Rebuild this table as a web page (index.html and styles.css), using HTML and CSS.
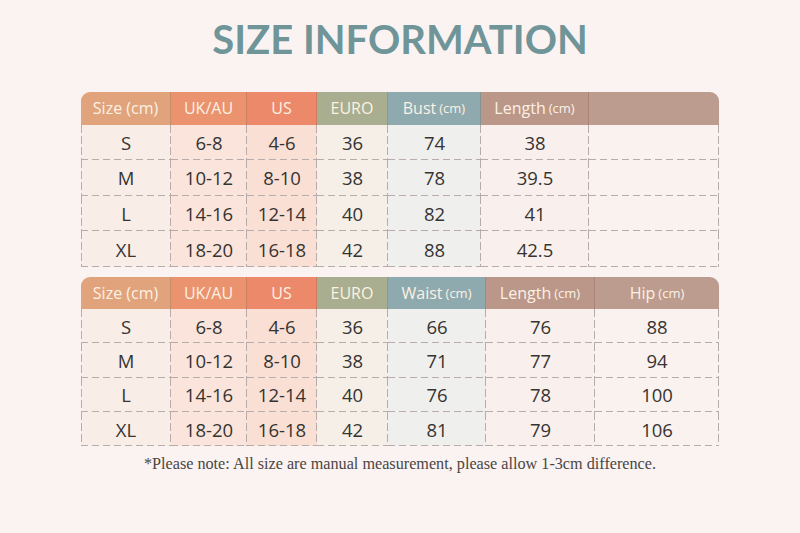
FILE: index.html
```html
<!DOCTYPE html>
<html lang="en">
<head>
<meta charset="utf-8">
<title>Size Information</title>
<link rel="stylesheet" href="styles.css">
</head>
<body>
<main class="page">
  <h1 class="title">SIZE INFORMATION</h1>

  <section class="chart chart-top">
    <div class="hd c1">Size (cm)</div>
    <div class="hd c2">UK/AU</div>
    <div class="hd c3">US</div>
    <div class="hd c4">EURO</div>
    <div class="hd c5">Bust <small>(cm)</small></div>
    <div class="hd c6">Length <small>(cm)</small></div>
    <div class="hd c7"></div>

    <div class="cell c1 first">S</div><div class="cell c2">6-8</div><div class="cell c3">4-6</div><div class="cell c4">36</div><div class="cell c5">74</div><div class="cell c6">38</div><div class="cell c7"></div>
    <div class="cell c1 first">M</div><div class="cell c2">10-12</div><div class="cell c3">8-10</div><div class="cell c4">38</div><div class="cell c5">78</div><div class="cell c6">39.5</div><div class="cell c7"></div>
    <div class="cell c1 first">L</div><div class="cell c2">14-16</div><div class="cell c3">12-14</div><div class="cell c4">40</div><div class="cell c5">82</div><div class="cell c6">41</div><div class="cell c7"></div>
    <div class="cell c1 first">XL</div><div class="cell c2">18-20</div><div class="cell c3">16-18</div><div class="cell c4">42</div><div class="cell c5">88</div><div class="cell c6">42.5</div><div class="cell c7"></div>
  </section>

  <section class="chart chart-bottom">
    <div class="hd c1">Size (cm)</div>
    <div class="hd c2">UK/AU</div>
    <div class="hd c3">US</div>
    <div class="hd c4">EURO</div>
    <div class="hd c5">Waist <small>(cm)</small></div>
    <div class="hd c6">Length <small>(cm)</small></div>
    <div class="hd c7">Hip <small>(cm)</small></div>

    <div class="cell c1 first">S</div><div class="cell c2">6-8</div><div class="cell c3">4-6</div><div class="cell c4">36</div><div class="cell c5">66</div><div class="cell c6">76</div><div class="cell c7">88</div>
    <div class="cell c1 first">M</div><div class="cell c2">10-12</div><div class="cell c3">8-10</div><div class="cell c4">38</div><div class="cell c5">71</div><div class="cell c6">77</div><div class="cell c7">94</div>
    <div class="cell c1 first">L</div><div class="cell c2">14-16</div><div class="cell c3">12-14</div><div class="cell c4">40</div><div class="cell c5">76</div><div class="cell c6">78</div><div class="cell c7">100</div>
    <div class="cell c1 first">XL</div><div class="cell c2">18-20</div><div class="cell c3">16-18</div><div class="cell c4">42</div><div class="cell c5">81</div><div class="cell c6">79</div><div class="cell c7">106</div>
  </section>

  <p class="note">*Please note: All size are manual measurement, please allow 1-3cm difference.</p>
</main>
</body>
</html>
```

FILE: styles.css
```css
* { box-sizing: border-box; margin: 0; padding: 0; }

html, body {
  width: 800px;
  height: 533px;
  overflow: hidden;
}

body {
  background: #fbf3f2;
  font-family: "Open Sans", "Noto Sans", sans-serif;
  color: #3b3836;
}

.page {
  display: flex;
  flex-direction: column;
  align-items: center;
  padding-top: 17px;
}

.title {
  font-family: "Lato", "Open Sans", sans-serif;
  font-weight: 700;
  font-size: 40px;
  line-height: 44px;
  letter-spacing: 0;
  color: #6f9599;
  margin-bottom: 31px;
}

.chart {
  display: grid;
  width: 638px;
  border-radius: 9px 9px 0 0;
  overflow: hidden;
}

.chart-top {
  grid-template-columns: 90px 76px 70px 71px 93px 108px 130px;
  grid-template-rows: 32.5px repeat(4, 35.6px);
}

.chart-bottom {
  margin-top: 10px;
  grid-template-columns: 90px 76px 70px 71px 98px 109px 124px;
  grid-template-rows: 32px repeat(4, 34.4px);
}

.hd {
  display: flex;
  align-items: center;
  justify-content: center;
  font-size: 16px;
  color: #fdf1e3;
  border-right: 1px solid rgba(110, 70, 50, 0.22);
  white-space: nowrap;
}

.hd.c7 { border-right: none; }

.hd small {
  font-size: 13px;
  margin-left: 3px;
}

.hd.c1 { background: #e0a37c; }
.hd.c2 { background: #ea936e; }
.hd.c3 { background: #ec896a; }
.hd.c4 { background: #a8ae8f; }
.hd.c5 { background: #8eaaaf; }
.hd.c6 { background: #ba9789; }
.hd.c7 { background: #bc9c8e; }

.cell {
  display: flex;
  align-items: center;
  justify-content: center;
  font-size: 18.5px;
  color: #363432;
  background:
    linear-gradient(to right, #b7acaa 7px, transparent 7px) left bottom / 11px 1px repeat-x,
    linear-gradient(to bottom, #b7acaa 8px, transparent 8px) right top / 1px 11px repeat-y,
    var(--tint);
}

.cell.first {
  background:
    linear-gradient(to right, #b7acaa 7px, transparent 7px) left bottom / 11px 1px repeat-x,
    linear-gradient(to bottom, #b7acaa 8px, transparent 8px) right top / 1px 11px repeat-y,
    linear-gradient(to bottom, #b7acaa 8px, transparent 8px) left top / 1px 11px repeat-y,
    var(--tint);
}

.cell.c1 { --tint: #f9ede7; }
.cell.c2 { --tint: #fae4db; }
.cell.c3 { --tint: #fadfd4; }
.cell.c4 { --tint: #f5efe8; }
.cell.c5 { --tint: #eff0ee; }
.cell.c6 { --tint: #f9f0ed; }
.cell.c7 { --tint: #faf2ef; }

.note {
  margin-top: 9px;
  font-family: "Liberation Serif", "DejaVu Serif", serif;
  font-size: 16.2px;
  color: #4a4644;
}
```
